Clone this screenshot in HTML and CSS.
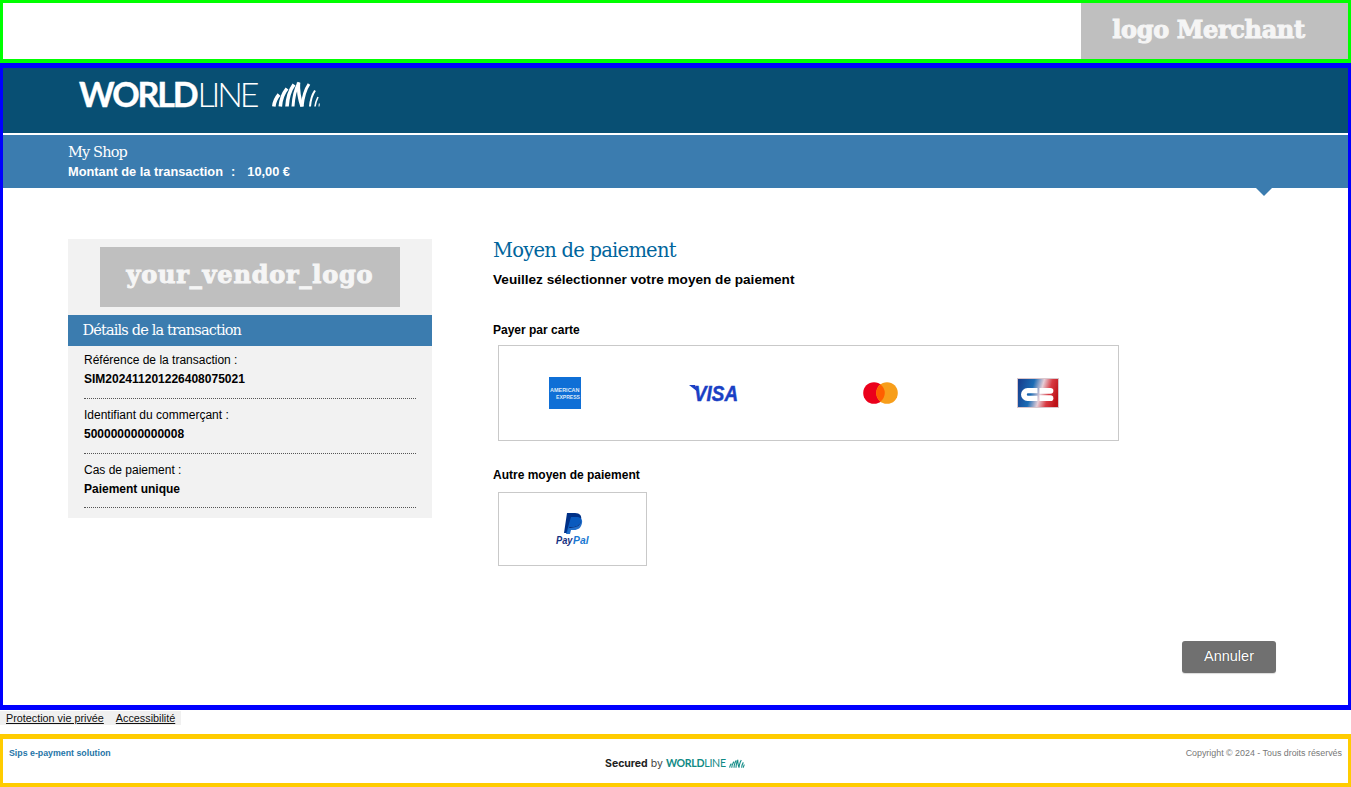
FILE: index.html
```html
<!DOCTYPE html>
<html lang="fr">
<head>
<meta charset="utf-8">
<title>Moyen de paiement</title>
<link rel="stylesheet" href="styles.css">
</head>
<body>
<header class="merchant">
  <div class="merchant-logo">logo Merchant</div>
</header>
<div class="frame">
  <div class="brand">
    <div class="wordmark"><b>WORLD</b><span>LINE</span></div>
    <svg class="arcs" viewBox="0 0 48 26" width="48" height="26" fill="none" stroke="#fff">
      <path d="M1.800 25.500C2.300 21 4 17 7 13.500" stroke-width="3.600"/>
      <path d="M8.300 25.500C8.800 19 11 12.500 15 7.500" stroke-width="3.600"/>
      <path d="M15 25.500C15.500 17 18 9 22 3.500" stroke-width="3.600"/>
      <path d="M21 25.500C21.500 16 24 7 27 1.500" stroke-width="3"/>
      <path d="M26.500 1.500C26 10 27.500 18 30 25.500" stroke-width="3.400"/>
      <path d="M30 25.500C31 17 33.500 8 37 3" stroke-width="3"/>
      <path d="M38 25.500C38.500 19 40 14 43 9.500" stroke-width="2"/>
      <path d="M43 25.500C43.500 22 44.500 19 46 16" stroke-width="1.600"/>
      <path d="M47 25.500L47.300 22.500" stroke-width="1"/>
    </svg>
  </div>
  <div class="band">
    <div class="shop">My Shop</div>
    <div class="amount"><span>Montant de la transaction</span><span class="colon">:</span><span>10,00 €</span></div>
    <i class="notch"></i>
  </div>
  <main class="content">
    <aside class="side">
      <div class="vendor-wrap"><div class="vendor">your_vendor_logo</div></div>
      <h2 class="side-title">Détails de la transaction</h2>
      <dl class="details">
        <div class="row"><dt>Référence de la transaction :</dt><dd>SIM202411201226408075021</dd></div>
        <div class="row"><dt>Identifiant du commerçant :</dt><dd>500000000000008</dd></div>
        <div class="row"><dt>Cas de paiement :</dt><dd>Paiement unique</dd></div>
      </dl>
    </aside>
    <section class="pay">
      <h1 class="pay-title">Moyen de paiement</h1>
      <p class="pay-sub">Veuillez sélectionner votre moyen de paiement</p>
      <h3 class="group first">Payer par carte</h3>
      <div class="cards">
        <a class="card">
          <svg width="32" height="32" viewBox="0 0 32 32">
            <rect width="32" height="32" fill="#0f6fd6"/>
            <text class="amex" x="1" y="15" textLength="29.500" lengthAdjust="spacingAndGlyphs">AMERICAN</text>
            <text class="amex" x="7" y="22" textLength="24" lengthAdjust="spacingAndGlyphs">EXPRESS</text>
          </svg>
        </a>
        <a class="card">
          <svg width="50" height="18" viewBox="0 0 50 18">
            <path d="M0 1H6L9 8Z" fill="#1a3fc4"/>
            <text class="visa" x="5" y="17" textLength="44" lengthAdjust="spacingAndGlyphs">VISA</text>
          </svg>
        </a>
        <a class="card">
          <svg width="35" height="22" viewBox="0 0 35 22">
            <circle cx="11" cy="11" r="10.800" fill="#eb001b"/>
            <circle cx="24" cy="11" r="10.800" fill="#f79e1b"/>
            <path d="M17.500 2.400a10.800 10.800 0 0 1 0 17.200a10.800 10.800 0 0 1 0-17.200Z" fill="#ff5f00"/>
          </svg>
        </a>
        <a class="card">
          <svg width="42" height="30" viewBox="0 0 42 30">
            <defs>
              <linearGradient id="cb" x1="0" x2="1" y1="0.300" y2="0.500">
                <stop offset="0" stop-color="#17408f"/>
                <stop offset="0.350" stop-color="#1b6cb5"/>
                <stop offset="0.580" stop-color="#e6cdd6"/>
                <stop offset="0.780" stop-color="#d83a42"/>
                <stop offset="1" stop-color="#bd1218"/>
              </linearGradient>
            </defs>
            <rect x="0.500" y="0.500" width="41" height="29" fill="url(#cb)" stroke="#d9c6cc"/>
            <path d="M20.500 10H10.500a6.500 6.500 0 0 0 0 13H20.500V17.700H11a1.200 1.200 0 0 1 0-2.400H20.500Z" fill="#fff"/>
            <path d="M22.500 10H33.500a2.800 2.800 0 0 1 0 5.700H22.500Z" fill="#fff"/>
            <path d="M22.500 17.300H33.500a2.850 2.850 0 0 1 0 5.700H22.500Z" fill="#fff"/>
          </svg>
        </a>
      </div>
      <h3 class="group">Autre moyen de paiement</h3>
      <div class="other">
        <svg width="33" height="33" viewBox="0 0 33 33">
          <path d="M11 0h8c5 0 7 3 6 7-1 5-5 7-9 7h-3l-2 6H8Z" fill="#003087"/>
          <path d="M15 4h6c3 0 6 2 5 6-1 5-4 7-8 7h-3l-1 4H10Z" fill="#0a5fc4" opacity=".9"/>
          <path d="M13.500 14h3c4 0 7.500-2 8.700-6.500-.2 3.500-3 6.500-7 6.800l-5.200 .6Z" fill="#001c64"/>
          <text class="pp" x="0" y="31" textLength="16.500" lengthAdjust="spacingAndGlyphs">Pay</text>
          <text class="pp pal" x="17" y="31" textLength="15.500" lengthAdjust="spacingAndGlyphs">Pal</text>
        </svg>
      </div>
      <div class="actions"><button class="cancel" type="button">Annuler</button></div>
    </section>
  </main>
</div>
<nav class="links">
  <div class="links-bar"><a href="#">Protection vie privée</a><a href="#">Accessibilité</a></div>
</nav>
<footer class="foot">
  <div class="sips">Sips e-payment solution</div>
  <div class="secured">
    <span class="sec-a">Secured</span> <span class="sec-b">by</span>
    <span class="sec-w"><b>WORLD</b><span>LINE</span></span>
    <svg width="16" height="9" viewBox="0 0 48 26" fill="none" stroke="#0f8a85" stroke-width="3.200">
      <path d="M1.800 25.500C2.300 21 4 17 7 13.500M8.300 25.500C8.800 19 11 12.500 15 7.500M15 25.500C15.500 17 18 9 22 3.500M21 25.500C21.500 16 24 7 27 1.500M26.500 1.500C26 10 27.500 18 30 25.500M30 25.500C31 17 33.500 8 37 3M38 25.500C38.500 19 40 14 43 9.500M43 25.500C43.500 22 44.500 19 46 16"/>
    </svg>
  </div>
  <div class="copy">Copyright © 2024 - Tous droits réservés</div>
</footer>
</body>
</html>
```
FILE: styles.css
```css
* { box-sizing: border-box; }
html, body { margin: 0; padding: 0; height: 787px; overflow: hidden; }
body { font-family: "Liberation Sans", Arial, sans-serif; font-size: 12px; color: #000; background: #fff; }
svg { overflow: visible; }

.merchant { height: 63px; border: solid #00ff00; border-width: 3px 3px 4px; display: flex; justify-content: flex-end; }
.merchant-logo { width: 267px; background: #bfbfbf; color: #f5f5f5; font: 700 24px/54px "DejaVu Serif", serif; letter-spacing: -0.35px; text-align: center; -webkit-text-stroke: 1px #f5f5f5; padding-right: 12px; }

.frame { height: 647px; border: solid #0000ff; border-width: 5px 3px; display: flex; flex-direction: column; }
.brand { height: 65px; background: #084f73; display: flex; align-items: flex-start; padding: 13px 0 0 76px; gap: 14px; color: #fff; }
.wordmark { font: 400 34px/26px Lato, sans-serif; height: 26px; white-space: nowrap; width: 179px; }
.wordmark b { font-weight: 700; letter-spacing: -2.1px; -webkit-text-stroke: 0.4px #fff; }
.wordmark span { font-weight: 300; letter-spacing: -3.2px; margin-left: 1px; }
.arcs { display: block; }

.band { position: relative; height: 55px; border-top: 2px solid #fff; background: #3b7caf; padding: 7px 0 0 65px; color: #fff; }
.shop { font: 400 14.500px/20px "DejaVu Serif", serif; letter-spacing: -0.85px; }
.amount { display: flex; font-size: 12.800px; font-weight: 700; line-height: 18px; margin-top: 1px; }
.colon { margin: 0 12px 0 8px; }
.notch { position: absolute; left: 1253px; bottom: -8px; border: solid transparent; border-width: 8px 8.500px 0; border-top-color: #3b7caf; }

.content { flex: 1; display: flex; align-items: flex-start; padding: 51px 72px 0 65px; }
.side { width: 364px; background: #f2f2f2; flex: none; }
.vendor-wrap { height: 76px; padding-top: 8px; display: flex; justify-content: center; }
.vendor { width: 300px; height: 60px; background: #bfbfbf; color: #f5f5f5; font: 700 24px/56px "DejaVu Serif", serif; letter-spacing: 0.8px; text-align: center; -webkit-text-stroke: 1px #f5f5f5; }
.side-title { margin: 0; height: 31px; background: #3b7caf; color: #fff; font: 400 14.500px/30px "DejaVu Serif", serif; letter-spacing: -0.85px; padding-left: 14.500px; }
.details { margin: 0; padding: 5px 16px 10px; }
.row { height: 48px; border-bottom: 1px dotted #555; }
.row + .row { margin-top: 7px; }
.row:last-child { height: 47px; }
.details dt { line-height: 19px; }
.details dd { margin: 0; font-weight: 700; line-height: 19px; }

.pay { flex: 1; margin-left: 61px; min-width: 0; display: flex; flex-direction: column; height: 100%; }
.pay-title { margin: 0; font: 400 19.500px/24px "DejaVu Serif", serif; letter-spacing: -0.75px; color: #00659c; }
.pay-sub { margin: 8px 0 0; font-size: 13.600px; font-weight: 700; line-height: 18px; }
.group { margin: 27px 0 0; font-size: 12px; font-weight: 700; line-height: 14px; }
.group.first { margin-top: 34px; }
.cards { display: grid; grid-template-columns: 132px 166px 166px 150px; align-items: center; width: 621px; height: 96px; margin: 8px 0 0 5px; padding-right: 5px; border: 1px solid #c9c9c9; }
.card { display: flex; justify-content: center; align-items: center; }
.card svg, .other svg { display: block; }
.other { width: 149px; height: 74px; margin: 10px 0 0 5px; border: 1px solid #c9c9c9; display: flex; align-items: center; justify-content: center; }
.amex { font: 700 5.500px "Liberation Sans", sans-serif; fill: #dbe9f8; }
.visa { font: italic 700 22px "Liberation Sans", sans-serif; fill: #1a3fc4; stroke: #1a3fc4; stroke-width: 0.5px; }
.pp { font: italic 700 10px "Liberation Sans", sans-serif; fill: #14307f; }
.pal { fill: #1a78d2; }
.actions { display: flex; justify-content: flex-end; margin: 75px 0 0; }
.cancel { width: 94px; height: 32px; border: 0; border-radius: 3px; background: #707070; color: #fff; font: 400 14.500px/28px "Liberation Sans", sans-serif; padding: 0 0 2px; text-shadow: 0 0 1px #333; box-shadow: 0 1px 1px rgba(0,0,0,.15); }

.links { height: 24px; padding-top: 1px; }
.links-bar { display: inline-flex; background: #f0f0f0; height: 14px; padding: 0 6px; gap: 12px; font-size: 10.800px; line-height: 14px; }
.links-bar a { color: #111; text-decoration: underline; }

.foot { position: relative; height: 53px; border: solid #ffcc00; border-width: 5px 3px 4px; padding: 0 6px; }
.sips { font-size: 8.800px; font-weight: 700; color: #1f76a8; line-height: 10px; padding-top: 9px; box-sizing: content-box; }
.copy { position: absolute; right: 6px; top: 9px; font-size: 8.900px; line-height: 10px; color: #777; }
.secured { display: flex; align-items: center; gap: 3px; height: 10px; position: absolute; left: 602px; top: 19px; white-space: nowrap; font-family: Inter, sans-serif; font-size: 10.500px; }
.sec-a { font-weight: 700; color: #222; }
.sec-b { color: #444; }
.sec-w { color: #0f8a85; font: 400 10.600px Lato, sans-serif; letter-spacing: -0.3px; }
.sec-w b { font-weight: 700; }
```
